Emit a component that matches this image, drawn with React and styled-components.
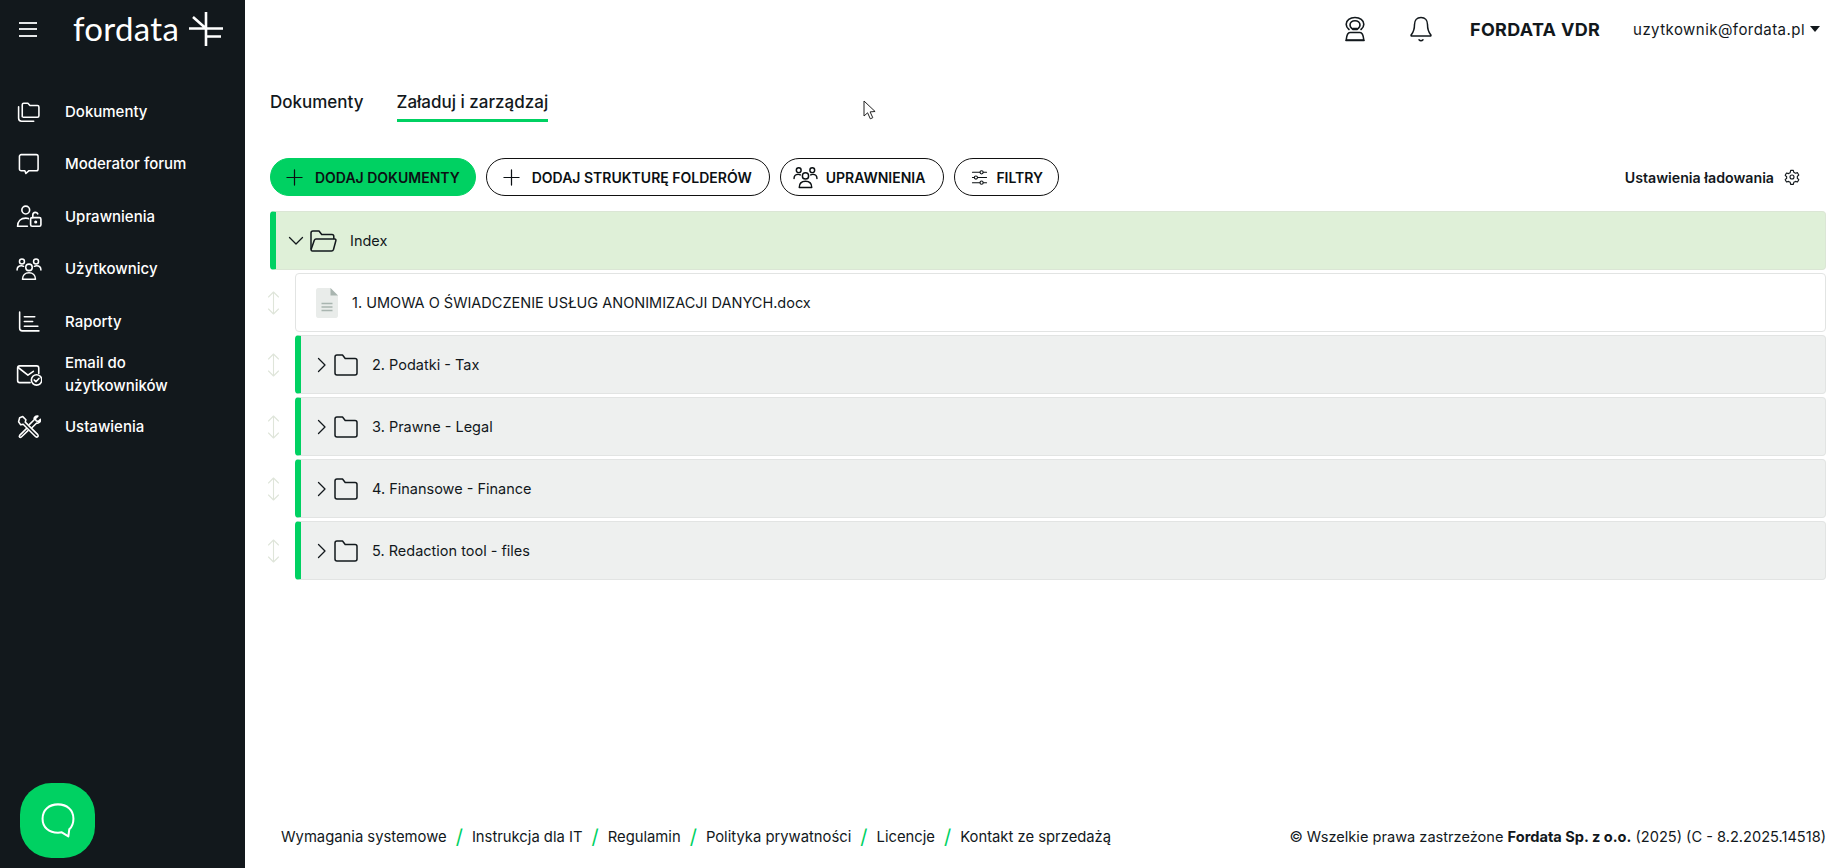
import styled, { createGlobalStyle } from 'styled-components';

const GREEN = '#00d162';
const DARK = '#12181c';
const FONT = '"Inter", "Noto Sans", sans-serif';

const GlobalStyle = createGlobalStyle`
  html, body {
    margin: 0;
    padding: 0;
    height: 100%;
    background: #fff;
    font-family: ${FONT};
    color: ${DARK};
  }
  * {
    box-sizing: border-box;
  }
`;

const Stroke = ({ size = 24, w, h, sw = 1.5, color = 'currentColor', children, vb }) => (
  <svg
    width={w || size}
    height={h || size}
    viewBox={vb || '0 0 24 24'}
    fill="none"
    stroke={color}
    strokeWidth={sw}
    strokeLinecap="round"
    strokeLinejoin="round"
  >
    {children}
  </svg>
);

const IconFolders = () => (
  <Stroke size={25}>
    <path d="M6 17V5.5C6 4.7 6.6 4 7.4 4h4l2 2.2h7.2c.8 0 1.4.7 1.4 1.5V16c0 .8-.6 1.5-1.4 1.5H7" />
    <path d="M2.5 7.5v11c0 1.6 1.2 2.8 2.8 2.8H17" />
  </Stroke>
);
const IconChat = () => (
  <Stroke size={25}>
    <path d="M5 3.5h14.5c1 0 1.7.8 1.7 1.7v12c0 1-.7 1.7-1.7 1.7h-7l-3 2.6-1-2.6H5c-1 0-1.7-.7-1.7-1.7v-12c0-.9.7-1.7 1.700-1.700z" />
  </Stroke>
);
const IconUserLock = () => (
  <Stroke size={26}>
    <circle cx="9" cy="6.5" r="3.6" />
    <path d="M1.5 21.5c0-4.5 3-7.5 7.5-7.500 1 0 2 .2 2.500.4" />
    <path d="M1.5 21.5h9" />
    <rect x="13.5" y="13.5" width="9.5" height="8" rx="1.4" />
    <path d="M15.5 13.5v-2.4c0-1.5 1-2.5 2.4-2.5 1 0 1.8.5 2.2 1.4" />
    <circle cx="18.2" cy="17.5" r=".7" />
  </Stroke>
);
const IconUsers = ({ size = 26 }) => (
  <Stroke size={size} sw={1.4}>
    <circle cx="12" cy="10.5" r="3" />
    <circle cx="5.5" cy="5" r="2.3" />
    <circle cx="18.5" cy="5" r="2.3" />
    <path d="M6 21.5c0-3.8 2.5-6 6-6s6 2.2 6 6z" />
    <path d="M1 13c0-2.5 1.800-4 4-4 .8 0 1.500.2 2 .5" />
    <path d="M23 13c0-2.500-1.800-4-4-4-.8 0-1.500.2-2 .5" />
  </Stroke>
);
const IconReport = () => (
  <Stroke size={25}>
    <path d="M3.500 3v15.500c0 1.500 1 2.500 2.500 2.500h16" />
    <path d="M8 7.500h10M8 12h8M8 16.500h13" />
  </Stroke>
);
const IconMailCheck = () => (
  <Stroke size={26}>
    <path d="M13 20H3.500C2.400 20 1.500 19 1.500 18V6.500c0-1.100.9-2 2-2H19c1.100 0 2 .9 2 2v5" />
    <path d="M2 6l9 7 5-3.500" />
    <circle cx="19" cy="17.500" r="4.800" />
    <path d="M16.800 17.500l1.600 1.600 2.800-3" />
  </Stroke>
);
const IconTools = () => (
  <Stroke size={25}>
    <path d="M3.500 3.500l3-1 3 3-.6 2.300 12 12c.6.8.6 1.500 0 2-.6.5-1.300.5-2 0l-12-12-2.400.6-2-3z" />
    <path d="M13 10l4.500-4.500c-.5-2 1-3.800 3.500-3.500l-2.500 2.500.8 2 2 .7 2.200-2.200c.3 2.500-1.500 4.200-3.600 3.700L15.500 13" />
    <path d="M10 14l-6.500 6.500c-.5.700-.5 1.200 0 1.700.5.400 1 .4 1.600-.1l6.400-6.100" />
  </Stroke>
);
const IconWebcam = () => (
  <Stroke w={24} h={26} vb="0 0 24 26" sw={1.6}>
    <path d="M6 13.500c-1.800-1.400-2.800-3.200-2.800-5.300C3.200 4.400 7 1.500 12 1.500s8.800 2.900 8.800 6.700c0 2.100-1 3.900-2.800 5.300" />
    <path d="M8.800 12.500C7.500 11.500 7 10.300 7 9c0-2.500 2.200-4.300 5-4.300s5 1.800 5 4.300c0 1.300-.5 2.500-1.800 3.500" />
    <path d="M10 13h4" strokeWidth="2.400" />
    <path d="M7 16.500h10c2 0 3.300 2 3.800 7.500H3.200C3.700 18.500 5 16.500 7 16.500z" />
    <path d="M3 24.500h18" />
  </Stroke>
);
const IconBell = () => (
  <Stroke w={22} h={26} vb="0 0 22 26" sw={1.5}>
    <path d="M11 1.500c-4.200 0-6.500 3-6.500 7 0 6.500-1.500 8-3.300 10.300-.4.500-.1 1.200.6 1.200h18.400c.7 0 1-.7.600-1.200C19 16.500 17.500 15 17.500 8.500c0-4-2.300-7-6.500-7z" />
    <path d="M9 23.800c.6.700 1.300 1 2 1s1.400-.3 2-1" />
  </Stroke>
);
const IconPlus = ({ size = 17 }) => (
  <Stroke size={size} vb="0 0 18 18" sw={1.300}>
    <path d="M9 1v16M1 9h16" />
  </Stroke>
);
const IconFilters = () => (
  <Stroke size={17} vb="0 0 18 18" sw={1.100}>
    <path d="M1.500 3.500h8M13 3.500h3.500M1.500 9h2M7 9h9.500M1.500 14.500h8M13 14.500h3.500" />
    <circle cx="11.200" cy="3.500" r="1.700" />
    <circle cx="5.200" cy="9" r="1.700" />
    <circle cx="11.200" cy="14.500" r="1.700" />
  </Stroke>
);
const IconGear = () => (
  <Stroke size={16} sw={1.700}>
    <circle cx="12" cy="12" r="3" />
    <path d="M10 2h4l.7 3 2.500 1.400 3-.9 2 3.500-2.200 2.100v2.800l2.200 2.100-2 3.500-3-.9-2.500 1.400-.7 3h-4l-.7-3-2.500-1.400-3 .9-2-3.500 2.200-2.100V11.600L1.800 9.500l2-3.500 3 .9L9.300 5.500z" />
  </Stroke>
);
const IconChevronDown = () => (
  <Stroke w={16} h={10} vb="0 0 16 10" sw={1.300}>
    <path d="M1.500 1.500L8 8l6.500-6.500" />
  </Stroke>
);
const IconChevronRight = () => (
  <Stroke w={10} h={16} vb="0 0 10 16" sw={1.300}>
    <path d="M1.500 1.500L8 8l-6.500 6.500" />
  </Stroke>
);
const IconFolder = () => (
  <Stroke w={24} h={22} vb="0 0 24 22" sw={1.500}>
    <path d="M1 3c0-1.200.8-2 2-2h5.500l2.700 3.500H21c1.200 0 2 .8 2 2V19c0 1.200-.8 2-2 2H3c-1.200 0-2-.8-2-2z" />
  </Stroke>
);
const IconFolderOpen = () => (
  <Stroke w={27} h={22} vb="0 0 27 22" sw={1.500}>
    <path d="M1 19V3c0-1.200.8-2 2-2h6l2.700 3.500H22c1 0 1.800.8 1.800 2v2" />
    <path d="M6 9h18.800c.8 0 1.300.7 1.100 1.500L23.500 19.500c-.3.900-1 1.500-2 1.500H2.500C1.500 21 .9 20.200 1.200 19.300L4.300 10.300C4.600 9.500 5.200 9 6 9z" />
  </Stroke>
);
const IconDoc = () => (
  <svg width="22" height="30" viewBox="0 0 22 30">
    <path d="M2 0h12.500L22 7.500V27.500c0 1.400-.9 2.500-2 2.500H2c-1.100 0-2-1.100-2-2.500V2.500C0 1.100.9 0 2 0z" fill="#e9ecea" />
    <path d="M14.500 0L22 7.500h-7.500z" fill="#a9b5b0" />
    <path d="M5.500 15.500h11M5.500 19h11M5.500 22.500h11" stroke="#a9b5b0" strokeWidth="1.500" />
  </svg>
);
const IconDragHandle = () => (
  <Stroke w={13} h={24} vb="0 0 13 24" sw={1.100} color="#dfe5da">
    <path d="M6.500 1v22M1.500 6l5-5 5 5M1.500 18l5 5 5-5" />
  </Stroke>
);
const LogoMark = () => (
  <svg width="34" height="34" viewBox="0 0 34 34" fill="none" stroke="#fff" strokeWidth="2.600">
    <path d="M17 0v34M0 16.500h34M17 24.500h15M4 5l13 11.500" />
  </svg>
);
const Cursor = () => (
  <svg width="14" height="20" viewBox="0 0 14 20">
    <path d="M1 1v15l3.600-3.200 2.700 6 2.500-1.100-2.700-5.800 5-.4z" fill="#fff" stroke="#222" strokeWidth="1" />
  </svg>
);

const Page = styled.div`
  display: flex;
  height: 868px;
  overflow: hidden;
  position: relative;
`;

const Sidebar = styled.aside`
  width: 245px;
  flex-shrink: 0;
  display: flex;
  flex-direction: column;
  background: ${DARK};
  color: #fff;
`;

const Brand = styled.div`
  height: 58px;
  display: flex;
  align-items: center;
  padding: 0 0 0 19px;
`;

const Burger = styled.div`
  width: 18px;
  height: 15px;
  margin-right: 36px;
  border-top: 2px solid #e4e6e7;
  border-bottom: 2px solid #e4e6e7;
  position: relative;
  &::after {
    content: '';
    position: absolute;
    left: 0;
    right: 0;
    top: 4px;
    height: 2px;
    background: #e4e6e7;
  }
`;

const LogoText = styled.span`
  width: 116px;
  font-family: "Lato", sans-serif;
  font-size: 33px;
  font-weight: 400;
  letter-spacing: 0.3px;
  margin-top: -2px;
`;

const Nav = styled.nav`
  margin-top: 27px;
  display: flex;
  flex-direction: column;
`;

const NavItem = styled.a`
  height: 52.5px;
  display: flex;
  align-items: center;
  padding-left: 16px;
  font-size: 15px;
  font-weight: 500;
  line-height: 23px;
  color: #fff;
`;

const NavIcon = styled.span`
  width: 49px;
  flex-shrink: 0;
  display: flex;
  align-items: center;
`;

const NavLabel = styled.span`
  max-width: 135px;
`;

const ChatButton = styled.div`
  margin: auto 0 10px 20px;
  width: 75px;
  height: 75px;
  border-radius: 42%;
  background: ${GREEN};
  display: flex;
  align-items: center;
  justify-content: center;
`;

const Main = styled.main`
  flex: 1;
  min-width: 0;
  display: flex;
  flex-direction: column;
  padding: 0 17px 0 25px;
`;

const TopBar = styled.header`
  height: 58px;
  display: flex;
  align-items: center;
  justify-content: flex-end;
  padding-right: 6px;
`;

const TopIcon = styled.span`
  display: flex;
  margin-right: ${(p) => p.$gap}px;
`;

const VdrName = styled.span`
  font-size: 18px;
  font-weight: 700;
  letter-spacing: 0.3px;
  margin-right: 33px;
`;

const UserMail = styled.span`
  font-size: 15px;
  letter-spacing: 0.45px;
`;

const Caret = styled.span`
  width: 0;
  height: 0;
  margin-left: 5px;
  border-left: 5px solid transparent;
  border-right: 5px solid transparent;
  border-top: 6px solid ${DARK};
`;

const Tabs = styled.div`
  margin-top: 30px;
  display: flex;
  gap: 33px;
`;

const Tab = styled.div`
  height: 34px;
  padding-top: 2px;
  font-size: 17px;
  font-weight: 500;
  line-height: 24px;
  border-bottom: 3px solid ${(p) => (p.$active ? GREEN : 'transparent')};
`;

const Toolbar = styled.div`
  margin-top: 36px;
  display: flex;
  align-items: center;
  gap: 10px;
`;

const PillButton = styled.button`
  height: 38px;
  padding: 0 ${(p) => p.$pr || 15}px 0 ${(p) => p.$pl || 16}px;
  display: flex;
  align-items: center;
  gap: ${(p) => p.$gap || 12}px;
  border-radius: 19px;
  border: 1px solid ${(p) => (p.$primary ? GREEN : '#111')};
  background: ${(p) => (p.$primary ? GREEN : '#fff')};
  color: #0b1013;
  font-family: ${FONT};
  font-size: 14px;
  font-weight: 600;
  white-space: nowrap;
`;

const LoadSettings = styled.div`
  margin-left: auto;
  margin-right: 26px;
  display: flex;
  align-items: center;
  gap: 10px;
  font-size: 14.200px;
  font-weight: 600;
`;

const Tree = styled.div`
  margin-top: 15px;
  display: flex;
  flex-direction: column;
  gap: 3px;
`;

const Row = styled.div`
  display: flex;
  align-items: stretch;
`;

const Handle = styled.div`
  width: 25px;
  flex-shrink: 0;
  display: flex;
  align-items: center;
  svg {
    margin-left: -3px;
  }
`;

const Entry = styled.div`
  flex: 1;
  height: 59px;
  display: flex;
  align-items: center;
  padding-left: ${(p) => p.$pl}px;
  font-size: 14.500px;
  border: 1px solid ${(p) => (p.$kind === 'open' ? '#dbe6d5' : '#e2e4e3')};
  border-left: ${(p) => (p.$kind === 'file' ? '1px solid #e2e4e3' : `6px solid ${GREEN}`)};
  border-radius: 4px;
  background: ${(p) => (p.$kind === 'open' ? '#dff0d8' : p.$kind === 'file' ? '#fff' : '#eef0ef')};
`;

const Chevron = styled.span`
  display: flex;
  width: ${(p) => p.$w}px;
  flex-shrink: 0;
`;

const EntryIcon = styled.span`
  display: flex;
  width: ${(p) => p.$w}px;
  flex-shrink: 0;
`;

const Footer = styled.footer`
  margin-top: auto;
  height: 62px;
  padding: 0 0 0 11px;
  display: flex;
  align-items: center;
  justify-content: space-between;
`;

const FooterLinks = styled.div`
  display: flex;
  align-items: center;
  font-size: 14.800px;
`;

const FooterLink = styled.span`
  display: inline-flex;
  align-items: center;
`;

const Copyright = styled.span`
  font-size: 14.600px;
`;

const Slash = styled.span`
  color: ${GREEN};
  font-size: 20px;
  font-weight: 400;
  margin: 0 9px;
`;

const PointerOverlay = styled.div`
  position: absolute;
  left: 863px;
  top: 100px;
  display: flex;
`;

const navItems = [
  ['Dokumenty', <IconFolders />],
  ['Moderator forum', <IconChat />],
  ['Uprawnienia', <IconUserLock />],
  ['Użytkownicy', <IconUsers />],
  ['Raporty', <IconReport />],
  ['Email do użytkowników', <IconMailCheck />],
  ['Ustawienia', <IconTools />],
];

const folders = ['2. Podatki - Tax', '3. Prawne - Legal', '4. Finansowe - Finance', '5. Redaction tool - files'];

const footerLinks = [
  'Wymagania systemowe',
  'Instrukcja dla IT',
  'Regulamin',
  'Polityka prywatności',
  'Licencje',
  'Kontakt ze sprzedażą',
];

const App = () => (
  <Page>
    <GlobalStyle />
    <Sidebar>
      <Brand>
        <Burger />
        <LogoText>fordata</LogoText>
        <LogoMark />
      </Brand>
      <Nav>
        {navItems.map(([label, icon]) => (
          <NavItem key={label}>
            <NavIcon>{icon}</NavIcon>
            <NavLabel>{label}</NavLabel>
          </NavItem>
        ))}
      </Nav>
      <ChatButton>
        <svg width="36" height="38" viewBox="0 0 30 32" fill="none" stroke="#fff" strokeWidth="1.700" strokeLinejoin="round">
          <path d="M15 2c7.500 0 13 4.500 13 12 0 4-1.500 7-3.500 9l-.8 6-5.500-3.500c-1 .2-2.200.3-3.200.3C7.500 25.800 2 21.500 2 14S7.500 2 15 2z" />
        </svg>
      </ChatButton>
    </Sidebar>
    <Main>
      <TopBar>
        <TopIcon $gap={43}><IconWebcam /></TopIcon>
        <TopIcon $gap={38}><IconBell /></TopIcon>
        <VdrName>FORDATA VDR</VdrName>
        <UserMail>uzytkownik@fordata.pl</UserMail>
        <Caret />
      </TopBar>
      <Tabs>
        <Tab>Dokumenty</Tab>
        <Tab $active>Załaduj i zarządzaj</Tab>
      </Tabs>
      <Toolbar>
        <PillButton $primary $pl={15}>
          <IconPlus />
          DODAJ DOKUMENTY
        </PillButton>
        <PillButton $pr={17}>
          <IconPlus />
          DODAJ STRUKTURĘ FOLDERÓW
        </PillButton>
        <PillButton $pl={12} $gap={8} $pr={18}>
          <IconUsers size={25} />
          UPRAWNIENIA
        </PillButton>
        <PillButton $gap={8}>
          <IconFilters />
          FILTRY
        </PillButton>
        <LoadSettings>
          Ustawienia ładowania
          <IconGear />
        </LoadSettings>
      </Toolbar>
      <Tree>
        <Row>
          <Entry $kind="open" $pl={12}>
            <Chevron $w={22}><IconChevronDown /></Chevron>
            <EntryIcon $w={40}><IconFolderOpen /></EntryIcon>
            Index
          </Entry>
        </Row>
        <Row>
          <Handle><IconDragHandle /></Handle>
          <Entry $kind="file" $pl={20}>
            <EntryIcon $w={36}><IconDoc /></EntryIcon>
            1. UMOWA O ŚWIADCZENIE USŁUG ANONIMIZACJI DANYCH.docx
          </Entry>
        </Row>
        {folders.map((name) => (
          <Row key={name}>
            <Handle><IconDragHandle /></Handle>
            <Entry $kind="folder" $pl={16}>
              <Chevron $w={17}><IconChevronRight /></Chevron>
              <EntryIcon $w={38}><IconFolder /></EntryIcon>
              {name}
            </Entry>
          </Row>
        ))}
      </Tree>
      <Footer>
        <FooterLinks>
          {footerLinks.map((link, i) => (
            <FooterLink key={link}>
              {i > 0 && <Slash>/</Slash>}
              {link}
            </FooterLink>
          ))}
        </FooterLinks>
        <Copyright>
          © Wszelkie prawa zastrzeżone <b>Fordata Sp. z o.o.</b> (2025) (C - 8.2.2025.14518)
        </Copyright>
      </Footer>
    </Main>
    <PointerOverlay><Cursor /></PointerOverlay>
  </Page>
);

export default App;
